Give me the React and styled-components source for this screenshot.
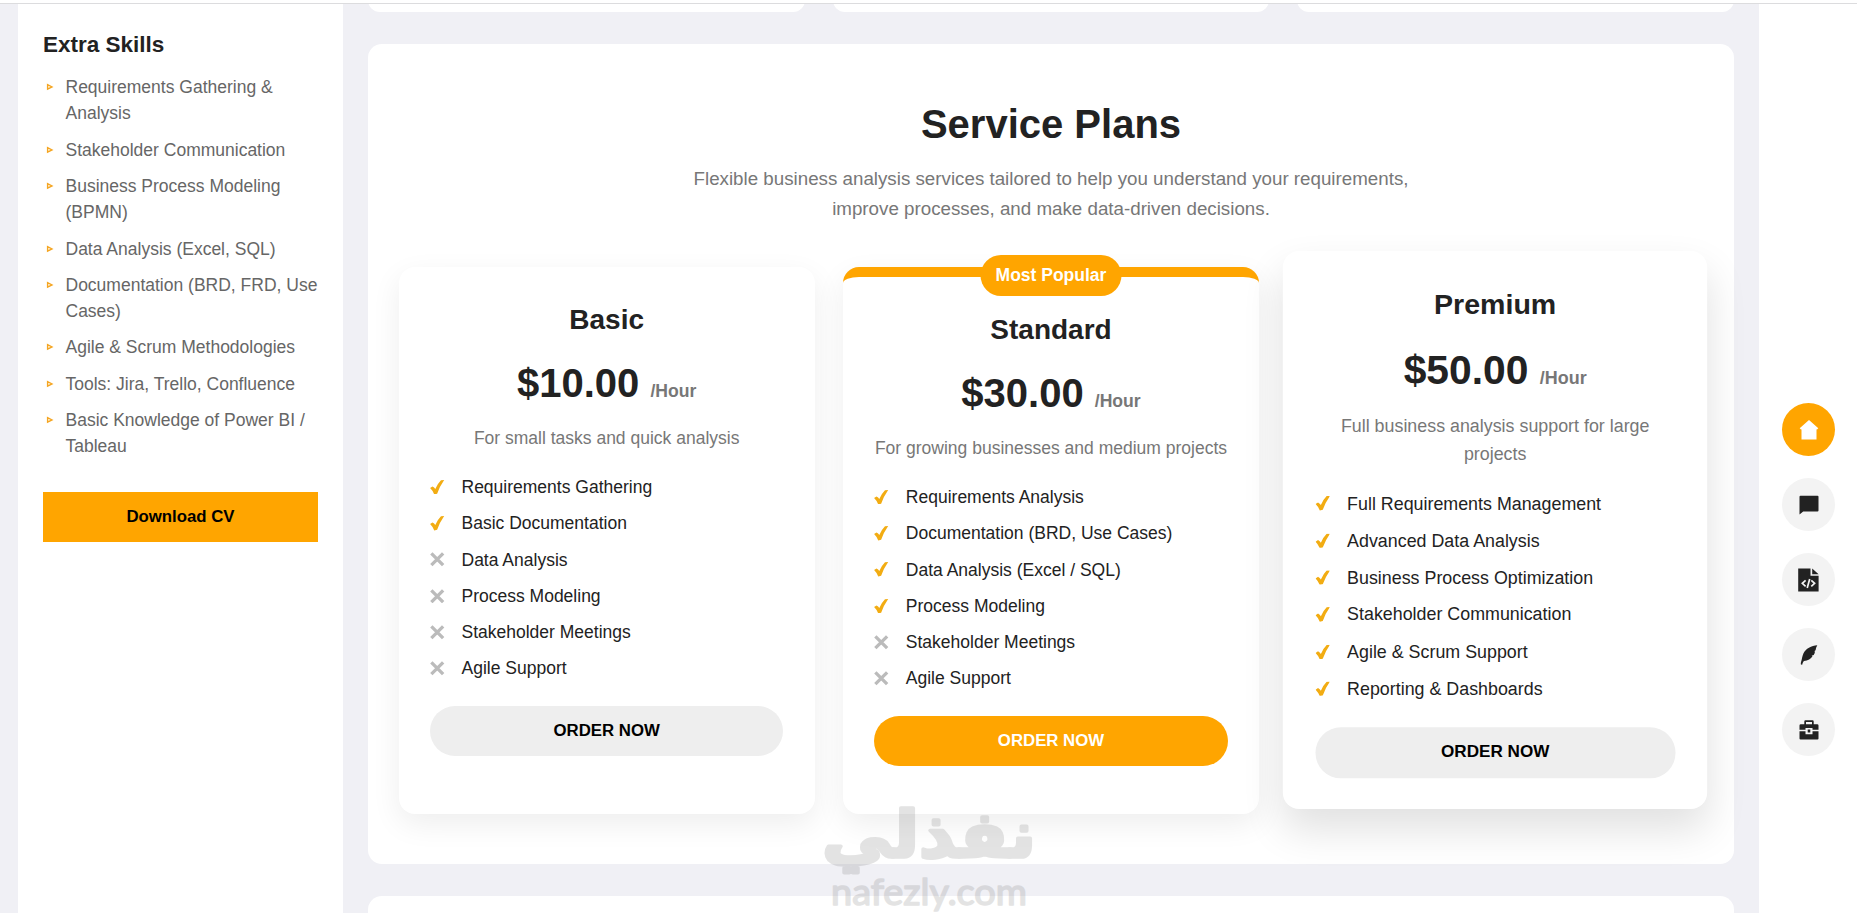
import React from 'react';
import styled, { createGlobalStyle, css } from 'styled-components';

const GlobalStyle = createGlobalStyle`
  * {
    box-sizing: border-box;
  }

  body {
    background: #f0f0f5;
    color: #222;
    font-family: 'Liberation Sans', Arial, sans-serif;
    font-size: 17.5px;
    line-height: 1.5;
    margin: 0;
    overflow: hidden;
  }

  h2, h3, p, ul {
    margin: 0;
    padding: 0;
  }

  ul {
    list-style: none;
  }
`;

const Page = styled.div`
  display: grid;
  grid-template-columns: 325px 1366px 98px;
  column-gap: 25px;
  height: 913px;
  overflow: hidden;
  padding-left: 18px;
  position: relative;
`;

const TopBar = styled.div`
  background: #fff;
  border-bottom: 1px solid #dcdcde;
  height: 4px;
  left: 0;
  position: absolute;
  right: 0;
  top: 0;
  z-index: 5;
`;

const Sidebar = styled.aside`
  background: #fff;
  padding: 27.5px 25px 0;
`;

const SidebarTitle = styled.h3`
  font-size: 22.5px;
  line-height: 33.6px;
`;

const Skills = styled.ul`
  display: flex;
  flex-direction: column;
  gap: 10px;
  padding-top: 13px;
`;

const Skill = styled.li`
  color: #666;
  display: flex;
  line-height: 26.3px;

  svg {
    flex: none;
    height: 8px;
    margin: 9px 12px 0 3px;
    width: 7.5px;
  }
`;

const DownloadButton = styled.button`
  background: #ffa500;
  border: 0;
  color: #000;
  display: block;
  font: bold 16.8px 'Liberation Sans', Arial, sans-serif;
  height: 50px;
  margin-top: 32.5px;
  padding: 0;
  width: 275px;
`;

const Main = styled.main`
  display: flex;
  flex-direction: column;
  gap: 32px;
`;

const ServiceRow = styled.div`
  display: grid;
  flex: none;
  gap: 28px;
  grid-template-columns: repeat(3, 1fr);
  height: 12px;
`;

const ServiceCard = styled.div`
  background: #fff;
  border-radius: 0 0 14px 14px;
`;

const Panel = styled.section`
  background: #fff;
  border-radius: 14px;
  flex: none;
  height: 820px;
  padding: 50px 30.5px;
  text-align: center;
`;

const PanelTitle = styled.h2`
  font-size: 40px;
  line-height: 60px;
`;

const Lead = styled.p`
  color: #777;
  font-size: 18.75px;
  line-height: 30px;
  margin: 10px auto 43px;
  width: 750px;
`;

const Plans = styled.div`
  display: grid;
  gap: 28px;
  grid-template-columns: repeat(3, 1fr);
  height: 547px;
`;

const Plan = styled.article`
  background: #fff;
  border-radius: 16px;
  box-shadow: 0 10px 30px rgba(0, 0, 0, .07);
  padding: 32px 31.5px 28px;
  position: relative;

  ${({ $popular }) => $popular && css`
    border-top: 10px solid #ffa500;
  `}

  ${({ $raised }) => $raised && css`
    box-shadow: 0 20px 40px rgba(0, 0, 0, .12);
    transform: translateY(-10.5px) scale(1.02);
  `}
`;

const Badge = styled.span`
  background: #ffa500;
  border-radius: 21px;
  color: #fff;
  font-weight: bold;
  left: 50%;
  line-height: 41px;
  position: absolute;
  text-align: center;
  top: -22px;
  transform: translateX(-50%);
  width: 141px;
`;

const PlanName = styled.h3`
  font-size: 28px;
  line-height: 42px;
`;

const Price = styled.h2`
  font-size: 40px;
  line-height: 60px;
  margin-top: 12px;
`;

const Unit = styled.span`
  color: #777;
  font-size: 17.6px;
  line-height: 1;
`;

const Description = styled.p`
  color: #777;
  line-height: 27.5px;
  margin-top: 12px;
`;

const Features = styled.ul`
  display: flex;
  flex-direction: column;
  gap: 10px;
  margin-top: 21.5px;
  text-align: left;
`;

const Feature = styled.li`
  align-items: center;
  display: flex;
  gap: 17px;
  line-height: 26.3px;

  svg {
    flex: none;
    height: 14.5px;
    width: 14.5px;
  }
`;

const OrderButton = styled.button`
  background: ${({ $primary }) => ($primary ? '#ffa500' : '#eee')};
  border: 0;
  border-radius: 25px;
  color: ${({ $primary }) => ($primary ? '#fff' : '#000')};
  display: block;
  font: bold 16.8px 'Liberation Sans', Arial, sans-serif;
  height: 50px;
  margin-top: 24.5px;
  padding: 0 0 1px;
  width: 100%;
`;

const NavRail = styled.nav`
  align-items: center;
  background: #fff;
  display: flex;
  flex-direction: column;
  gap: 22px;
  padding: 403px 0 0 1px;
`;

const NavButton = styled.a`
  align-items: center;
  background: ${({ $active }) => ($active ? '#ffa500' : '#f3f3f3')};
  border-radius: 50%;
  color: ${({ $active }) => ($active ? '#fff' : '#222')};
  display: flex;
  flex: none;
  height: 53px;
  justify-content: center;
  width: 53px;
`;

const Watermark = styled.div`
  color: #808080;
  left: 823px;
  opacity: .21;
  pointer-events: none;
  position: absolute;
  top: 803px;
  z-index: 4;

  svg {
    display: block;
    overflow: visible;
  }
`;

const Triangle = () => (
  <svg viewBox="0 0 7.5 8" fill="none" stroke="#f5a623" strokeWidth="1.4">
    <path d="M1.6 1.6v4.6L6 3.9z" />
  </svg>
);

const Check = () => (
  <svg viewBox="0 0 14 14" fill="#f2ac12">
    <path d="M.1 7.800 2.400 6.200Q4.200 7.100 5.100 8.700 7.600 3.100 10.600.2L13.700.1Q9.400 6.200 6.900 13.200L4.100 14Q2.500 10.100.1 7.800z" />
  </svg>
);

const Cross = () => (
  <svg viewBox="0 0 14 14" fill="none" stroke="#bbb" strokeWidth="3.2">
    <path d="M1.300 1.300 12.700 12.700M12.700 1.300 1.300 12.700" />
  </svg>
);

const HomeIcon = () => (
  <svg width="20" height="20" viewBox="0 0 20 20" fill="currentColor">
    <path d="M10 0 19.300 8.200 18 9.600 17.500 9.200V19.500H2.500V9.200L2 9.600.7 8.200z" />
  </svg>
);

const ChatIcon = () => (
  <svg width="20" height="20" viewBox="0 0 20 20" fill="currentColor">
    <path d="M1.500.8h17a1 1 0 0 1 1 1v13.600a1 1 0 0 1-1 1H4.200L.5 19.600V1.800a1 1 0 0 1 1-1z" />
  </svg>
);

const CodeFileIcon = () => (
  <svg width="21" height="24" viewBox="0 0 21 24" fill="none">
    <path fill="currentColor" d="M.2.5h12.300v7.300h8.100v15.700H.2zM14.200.5l6.400 5.800h-6.400z" />
    <path stroke="#f3f3f3" strokeWidth="1.700" d="M7.600 12.300 4.300 15.300l3.300 3M13.300 12.300l3.300 3-3.300 3M11.700 10.900 9.200 20" />
  </svg>
);

const FeatherIcon = () => (
  <svg width="20" height="20" viewBox="0 0 20 20" fill="currentColor">
    <path d="M18.300.3C12.500.6 6.600 3.800 4.400 8.400c-1.300 2.800-1.400 5.900-2.300 8.400-.3 1-.4 1.900-.2 2.800l1.300.1c.3-1.500.8-2.600 1.800-3.700 3.900-.4 7-2.400 8.500-4.800l-.9-.4 2.100-.8c.8-1.200 1.200-2.400 1.300-3.500l-.8-.2 1.400-1.100c.1-1.700.7-3.300 1.700-4.900z" />
  </svg>
);

const BriefcaseIcon = () => (
  <svg width="20" height="20" viewBox="0 0 20 20" fill="currentColor">
    <path fillRule="evenodd" d="M5.300 4.200V1.500Q5.300.3 6.500.3h7q1.200 0 1.200 1.200v2.700h3.500q1.300 0 1.300 1.300v4.200h-6V7.900H6.500v1.800h-6V5.500q0-1.300 1.300-1.300zM7 4.200h6V2H7z" />
    <path d="M.5 11.300h6v2.900h7v-2.900h6v7.200q0 1-1 1h-17q-1 0-1-1zM8.700 9.400h2.600v3.200H8.700z" />
  </svg>
);

const skills = [
  'Requirements Gathering & Analysis',
  'Stakeholder Communication',
  'Business Process Modeling (BPMN)',
  'Data Analysis (Excel, SQL)',
  'Documentation (BRD, FRD, Use Cases)',
  'Agile & Scrum Methodologies',
  'Tools: Jira, Trello, Confluence',
  'Basic Knowledge of Power BI / Tableau',
];

// `included` is how many of the features, from the top, the plan covers
const plans = [
  {
    name: 'Basic',
    price: '$10.00',
    description: 'For small tasks and quick analysis',
    included: 2,
    features: [
      'Requirements Gathering',
      'Basic Documentation',
      'Data Analysis',
      'Process Modeling',
      'Stakeholder Meetings',
      'Agile Support',
    ],
  },
  {
    name: 'Standard',
    price: '$30.00',
    description: 'For growing businesses and medium projects',
    included: 4,
    popular: true,
    features: [
      'Requirements Analysis',
      'Documentation (BRD, Use Cases)',
      'Data Analysis (Excel / SQL)',
      'Process Modeling',
      'Stakeholder Meetings',
      'Agile Support',
    ],
  },
  {
    name: 'Premium',
    price: '$50.00',
    description: 'Full business analysis support for large projects',
    included: 6,
    raised: true,
    features: [
      'Full Requirements Management',
      'Advanced Data Analysis',
      'Business Process Optimization',
      'Stakeholder Communication',
      'Agile & Scrum Support',
      'Reporting & Dashboards',
    ],
  },
];

const PlanCard = ({ plan }) => (
  <Plan $popular={plan.popular} $raised={plan.raised}>
    {plan.popular && <Badge>Most Popular</Badge>}
    <PlanName>{plan.name}</PlanName>
    <Price>{plan.price} <Unit>/Hour</Unit></Price>
    <Description>{plan.description}</Description>
    <Features>
      {plan.features.map((feature, i) => (
        <Feature key={feature}>
          {i < plan.included ? <Check /> : <Cross />}
          {feature}
        </Feature>
      ))}
    </Features>
    <OrderButton $primary={plan.popular}>ORDER NOW</OrderButton>
  </Plan>
);

const App = () => (
  <Page>
    <GlobalStyle />
    <TopBar />
    <Sidebar>
      <SidebarTitle>Extra Skills</SidebarTitle>
      <Skills>
        {skills.map((skill) => (
          <Skill key={skill}><Triangle /><span>{skill}</span></Skill>
        ))}
      </Skills>
      <DownloadButton>Download CV</DownloadButton>
    </Sidebar>
    <Main>
      <ServiceRow>
        <ServiceCard />
        <ServiceCard />
        <ServiceCard />
      </ServiceRow>
      <Panel>
        <PanelTitle>Service Plans</PanelTitle>
        <Lead>
          Flexible business analysis services tailored to help you understand your requirements,
          improve processes, and make data-driven decisions.
        </Lead>
        <Plans>
          {plans.map((plan) => <PlanCard key={plan.name} plan={plan} />)}
        </Plans>
      </Panel>
      <Panel />
    </Main>
    <NavRail>
      <NavButton $active><HomeIcon /></NavButton>
      <NavButton><ChatIcon /></NavButton>
      <NavButton><CodeFileIcon /></NavButton>
      <NavButton><FeatherIcon /></NavButton>
      <NavButton><BriefcaseIcon /></NavButton>
    </NavRail>
    <Watermark>
      <svg width="214" height="110" viewBox="0 0 214 110" fill="currentColor" stroke="currentColor" strokeLinejoin="round">
        <text x="106" y="54" textAnchor="middle" fontFamily="DejaVu Sans" fontWeight="bold" fontSize="64" strokeWidth="3.5" textLength="214" lengthAdjust="spacingAndGlyphs">نفذلي</text>
        <text x="8" y="102" fontFamily="Lato" fontSize="36" strokeWidth="1.6" textLength="196" lengthAdjust="spacingAndGlyphs">nafezly.com</text>
      </svg>
    </Watermark>
  </Page>
);

export default App;
